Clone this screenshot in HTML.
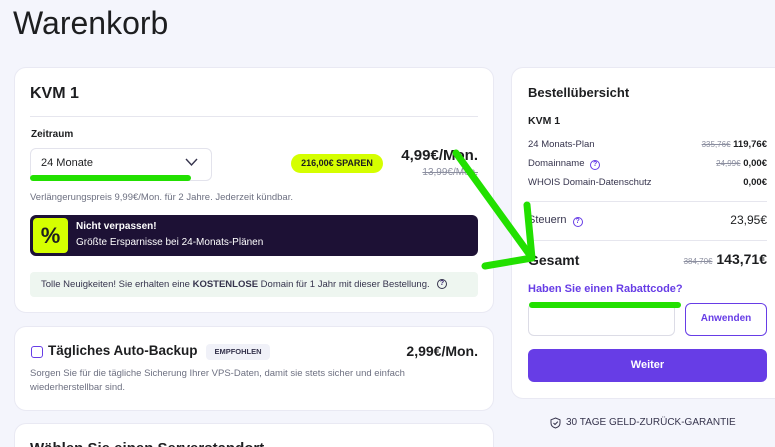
<!DOCTYPE html>
<html><head><meta charset="utf-8"><style>
*{box-sizing:border-box;margin:0;padding:0}
html{width:775px;height:447px;overflow:hidden}
body{width:775px;height:447px;overflow:hidden;background:#f4f5fc;font-family:"Liberation Sans",sans-serif;color:#2f1c6a;position:relative}
.a{position:absolute}
.card{position:absolute;background:#fff;border-radius:12px;border:1px solid #e9e9f3}
.r{text-align:right}
.g{color:#6d7081}
.s{text-decoration:line-through;color:#8c8fa0}
</style></head><body>
<div class="a" style="left:13px;top:5px;font-size:32px;color:#1d1e20">Warenkorb</div>

<div class="card" style="left:14px;top:67px;width:480px;height:246px"></div>
<div class="a" style="left:30px;top:85px;font-size:16px;font-weight:bold;color:#1d1e20">KVM 1</div>
<div class="a" style="left:30px;top:116px;width:448px;height:1px;background:#e6e6ee"></div>
<div class="a" style="left:31px;top:129px;font-size:10px;font-weight:bold;color:#1d1e20">Zeitraum</div>
<div class="a" style="left:30px;top:148px;width:182px;height:33px;border:1px solid #e3e3ec;border-radius:6px"></div>
<div class="a" style="left:41px;top:157px;font-size:11px;color:#1d1e20">24 Monate</div>
<svg class="a" style="left:185px;top:158px" width="13" height="9"><path d="M1 1l5.5 6L12 1" stroke="#36344d" stroke-width="1.4" fill="none"/></svg>
<div class="a" style="left:291px;top:154px;width:92px;height:19px;background:#d5ff00;border-radius:10px;font-size:9px;font-weight:bold;color:#1d1e20;text-align:center;line-height:19px">216,00€ SPAREN</div>
<div class="a r" style="left:380px;top:147px;width:98px;font-size:15px;font-weight:bold;color:#1d1e20">4,99€/Mon.</div>
<div class="a r s" style="left:380px;top:167px;width:98px;font-size:10px">13,99€/Mon.</div>
<div class="a g" style="left:30px;top:192px;font-size:9.5px">Verlängerungspreis 9,99€/Mon. für 2 Jahre. Jederzeit kündbar.</div>
<div class="a" style="left:30px;top:215px;width:448px;height:41px;background:#1d1135;border-radius:6px"></div>
<div class="a" style="left:33px;top:218px;width:35px;height:35px;background:#d5ff00;border-radius:4px;font-size:22px;font-weight:bold;color:#1d1e20;text-align:center;line-height:35px">%</div>
<div class="a" style="left:76px;top:221px;font-size:10px;font-weight:bold;color:#fff">Nicht verpassen!</div>
<div class="a" style="left:76px;top:237px;font-size:10px;color:#fff">Größte Ersparnisse bei 24-Monats-Plänen</div>
<div class="a" style="left:30px;top:272px;width:448px;height:25px;background:#eef6f0;border-radius:4px"></div>
<div class="a" style="left:41px;top:279px;font-size:9.5px;color:#36344d">Tolle Neuigkeiten! Sie erhalten eine <b>KOSTENLOSE</b> Domain für 1 Jahr mit dieser Bestellung.</div>
<div class="a" style="left:437px;top:279px;width:10px;height:10px;border:1.2px solid #36344d;border-radius:50%;font-size:7px;text-align:center;line-height:8px;font-weight:bold">?</div>

<div class="card" style="left:14px;top:326px;width:480px;height:85px"></div>
<div class="a" style="left:31px;top:346px;width:12px;height:12px;border:1.5px solid #673de6;border-radius:3px"></div>
<div class="a" style="left:48px;top:343px;font-size:13.5px;font-weight:bold;color:#1d1e20">Tägliches Auto-Backup</div>
<div class="a" style="left:206px;top:344px;width:64px;height:16px;background:#f0f1f8;border-radius:4px;font-size:7.5px;font-weight:bold;color:#36344d;text-align:center;line-height:16px">EMPFOHLEN</div>
<div class="a r" style="left:360px;top:343px;width:118px;font-size:14px;font-weight:bold;color:#1d1e20">2,99€/Mon.</div>
<div class="a g" style="left:30px;top:367px;font-size:9.5px;line-height:14px;width:430px">Sorgen Sie für die tägliche Sicherung Ihrer VPS-Daten, damit sie stets sicher und einfach wiederherstellbar sind.</div>

<div class="card" style="left:14px;top:423px;width:480px;height:24px;border-bottom:none;border-radius:12px 12px 0 0;overflow:hidden">
<div style="position:absolute;left:15px;top:16px;font-size:15px;font-weight:bold;color:#1d1e20;white-space:nowrap">Wählen Sie einen Serverstandort</div>
</div>

<div class="card" style="left:511px;top:67px;width:264px;height:332px;border-right:none;border-radius:12px 0 0 12px"></div>
<div class="a" style="left:528px;top:85px;font-size:13px;font-weight:bold;color:#1d1e20">Bestellübersicht</div>
<div class="a" style="left:528px;top:115px;font-size:10.5px;font-weight:bold;color:#1d1e20">KVM 1</div>
<div class="a" style="left:528px;top:139px;font-size:9.5px;color:#36344d">24 Monats-Plan</div>
<div class="a r" style="left:640px;top:139px;width:127px;font-size:9.5px;color:#1d1e20"><span class="s" style="font-size:8px">335,76€</span> <b>119,76€</b></div>
<div class="a" style="left:528px;top:158px;font-size:9.5px;color:#36344d">Domainname <span style="display:inline-block;width:10px;height:10px;border:1.2px solid #673de6;border-radius:50%;font-size:7px;text-align:center;line-height:8px;color:#673de6;margin-left:3px;font-weight:bold">?</span></div>
<div class="a r" style="left:640px;top:158px;width:127px;font-size:9.5px;color:#1d1e20"><span class="s" style="font-size:8px">24,99€</span> <b>0,00€</b></div>
<div class="a" style="left:528px;top:177px;font-size:9.5px;color:#36344d">WHOIS Domain-Datenschutz</div>
<div class="a r" style="left:640px;top:177px;width:127px;font-size:9.5px;font-weight:bold;color:#1d1e20">0,00€</div>
<div class="a" style="left:528px;top:201px;width:239px;height:1px;background:#e6e6ee"></div>
<div class="a" style="left:528px;top:214px;font-size:11px;color:#36344d">Steuern <span style="display:inline-block;width:10px;height:10px;border:1.2px solid #673de6;border-radius:50%;font-size:7px;text-align:center;line-height:8px;color:#673de6;margin-left:3px;font-weight:bold">?</span></div>
<div class="a r" style="left:640px;top:213px;width:127px;font-size:12px;color:#1d1e20">23,95€</div>
<div class="a" style="left:528px;top:240px;width:239px;height:1px;background:#e6e6ee"></div>
<div class="a" style="left:528px;top:252px;font-size:14px;font-weight:bold;color:#1d1e20">Gesamt</div>
<div class="a r" style="left:620px;top:251px;width:147px;font-size:14px;font-weight:bold;color:#1d1e20"><span class="s" style="font-size:8px;font-weight:normal">384,70€</span> 143,71€</div>
<div class="a" style="left:528px;top:283px;font-size:11px;font-weight:bold;color:#673de6">Haben Sie einen Rabattcode?</div>
<div class="a" style="left:528px;top:303px;width:147px;height:33px;border:1px solid #dcdce6;border-radius:6px"></div>
<div class="a" style="left:685px;top:303px;width:82px;height:33px;border:1.5px solid #673de6;border-radius:6px;font-size:10px;font-weight:bold;color:#673de6;text-align:center;line-height:30px">Anwenden</div>
<div class="a" style="left:528px;top:349px;width:239px;height:33px;background:#673de6;border-radius:6px;font-size:11px;font-weight:bold;color:#fff;text-align:center;line-height:33px">Weiter</div>
<svg class="a" style="left:550px;top:417px" width="11" height="12"><path d="M5.5 1L10 2.8V6c0 2.6-2 4.3-4.5 5C3 10.3 1 8.6 1 6V2.8z M3.5 6l1.5 1.5L7.8 4.6" stroke="#36344d" stroke-width="1" fill="none"/></svg>
<div class="a" style="left:566px;top:417px;font-size:10px;color:#36344d">30 TAGE GELD-ZURÜCK-GARANTIE</div>

<svg class="a" style="left:0;top:0" width="775" height="447">
<g stroke="#22e000" stroke-linecap="round" fill="none">
<path d="M33 178H188" stroke-width="6"/>
<path d="M532 305H678" stroke-width="6"/>
<path d="M456 153L532 258" stroke-width="7"/>
<path d="M527 205L532 258L485 266" stroke-width="7" stroke-linejoin="round"/>
</g>
</svg>
</body></html>
